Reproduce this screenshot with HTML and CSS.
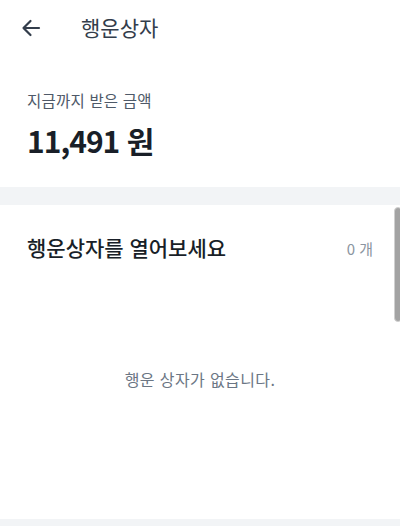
FILE: index.html
```html
<!DOCTYPE html>
<html lang="ko">
<head>
<meta charset="utf-8">
<link rel="stylesheet" href="styles.css">
</head>
<body>
<div class="page">
  <header class="header">
    <svg class="back" width="20" height="18" viewBox="0 0 20 18" aria-hidden="true">
      <path d="M18 9H2.5M9.5 2L2.5 9l7 7" fill="none" stroke="#333d4b" stroke-width="2.2" stroke-linecap="round" stroke-linejoin="round"/>
    </svg>
    <h1 class="title">행운상자</h1>
  </header>
  <section class="summary">
    <p class="label">지금까지 받은 금액</p>
    <p class="amount">11,491 원</p>
  </section>
  <div class="band"></div>
  <section class="boxes">
    <div class="boxes-head">
      <h2 class="boxes-title">행운상자를 열어보세요</h2>
      <span class="count">0 개</span>
    </div>
    <p class="empty">행운 상자가 없습니다.</p>
  </section>
  <div class="band bottom"></div>
  <div class="scroll-thumb"></div>
</div>
</body>
</html>
```
FILE: styles.css
```css
* { box-sizing: border-box; }
html, body { margin: 0; padding: 0; background: #fff; }
body {
  font-family: "Noto Sans CJK KR", "Noto Sans", sans-serif;
  color: #191f28;
}
.page { position: relative; width: 400px; height: 526px; overflow: hidden; display: flex; flex-direction: column; }
.header {
  height: 56px;
  display: flex;
  align-items: center;
  padding-left: 21px;
  gap: 40px;
}
.back { display: block; }
.title {
  margin: 0;
  font-size: 21px;
  font-weight: 400;
  color: #333d4b;
  line-height: 1;
  margin-top: -2px;
}
.summary { padding: 33px 27px 0; height: 131px; }
.label {
  margin: 0;
  font-size: 15.5px;
  line-height: 22px;
  color: #4e5968;
  letter-spacing: 0.2px;
}
.amount {
  margin: 9px 0 0;
  font-size: 30px;
  font-weight: 700;
  line-height: 40px;
  color: #191f28;
  letter-spacing: -1px;
}
.band { height: 18px; background: #f2f4f6; flex: none; }
.boxes { flex: 1; display: flex; flex-direction: column; }
.boxes-head {
  display: flex;
  align-items: center;
  justify-content: space-between;
  padding: 28px 27px 0;
}
.boxes-title {
  margin: 0;
  font-size: 21px;
  font-weight: 500;
  line-height: 28px;
  color: #191f28;
}
.count {
  font-size: 15px;
  color: #8b95a1;
  margin-top: 2px;
}
.empty {
  margin: 107px 0 0;
  text-align: center;
  font-size: 16px;
  line-height: 22px;
  letter-spacing: 0.4px;
  color: #6b7684;
}
.band.bottom { height: 7px; }
.scroll-thumb {
  position: absolute;
  left: 394px;
  top: 207px;
  width: 8px;
  height: 115px;
  border-radius: 4px;
  background: #a3a3a3;
  border: 1px solid #d0d0d0;
}
```
